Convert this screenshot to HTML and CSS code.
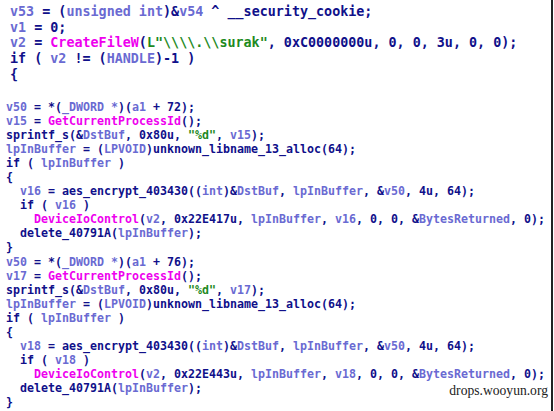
FILE: index.html
```html
<!DOCTYPE html>
<html>
<head>
<meta charset="utf-8">
<link rel="stylesheet" href="styles.css">
</head>
<body>
<div class="screen">
<pre class="code top"><span class="v">v53</span> = (<span class="v">unsigned int</span>)&amp;<span class="v">v54</span> ^ __security_cookie;
<span class="v">v1</span> = 0;
<span class="v">v2</span> = <span class="f">CreateFileW</span>(<span class="s">L"\\\\.\\surak"</span>, 0xC0000000u, 0, 0, 3u, 0, 0);
if ( <span class="v">v2</span> != (<span class="v">HANDLE</span>)-1 )
{</pre>
<pre class="code bottom"><span class="v">v50</span> = *(<span class="v">_DWORD *</span>)(<span class="v">a1</span> + 72);
<span class="v">v15</span> = <span class="f">GetCurrentProcessId</span>();
sprintf_s(&amp;<span class="v">DstBuf</span>, 0x80u, <span class="s">"%d"</span>, <span class="v">v15</span>);
<span class="v">lpInBuffer</span> = (<span class="v">LPVOID</span>)unknown_libname_13_alloc(64);
if ( <span class="v">lpInBuffer</span> )
{
  <span class="v">v16</span> = aes_encrypt_403430((<span class="v">int</span>)&amp;<span class="v">DstBuf</span>, <span class="v">lpInBuffer</span>, &amp;<span class="v">v50</span>, 4u, 64);
  if ( <span class="v">v16</span> )
    <span class="f">DeviceIoControl</span>(<span class="v">v2</span>, 0x22E417u, <span class="v">lpInBuffer</span>, <span class="v">v16</span>, 0, 0, &amp;<span class="v">BytesReturned</span>, 0);
  delete_40791A(<span class="v">lpInBuffer</span>);
}
<span class="v">v50</span> = *(<span class="v">_DWORD *</span>)(<span class="v">a1</span> + 76);
<span class="v">v17</span> = <span class="f">GetCurrentProcessId</span>();
sprintf_s(&amp;<span class="v">DstBuf</span>, 0x80u, <span class="s">"%d"</span>, <span class="v">v17</span>);
<span class="v">lpInBuffer</span> = (<span class="v">LPVOID</span>)unknown_libname_13_alloc(64);
if ( <span class="v">lpInBuffer</span> )
{
  <span class="v">v18</span> = aes_encrypt_403430((<span class="v">int</span>)&amp;<span class="v">DstBuf</span>, <span class="v">lpInBuffer</span>, &amp;<span class="v">v50</span>, 4u, 64);
  if ( <span class="v">v18</span> )
    <span class="f">DeviceIoControl</span>(<span class="v">v2</span>, 0x22E443u, <span class="v">lpInBuffer</span>, <span class="v">v18</span>, 0, 0, &amp;<span class="v">BytesReturned</span>, 0);
  delete_40791A(<span class="v">lpInBuffer</span>);
}</pre>
<div class="watermark">drops.wooyun.org</div>
</div>
</body>
</html>
```
FILE: styles.css
```css
html, body {
  margin: 0;
  padding: 0;
  background: #ffffff;
}
.screen {
  position: relative;
  width: 553px;
  height: 411px;
  box-sizing: border-box;
  border-right: 2px solid #222222;
  overflow: hidden;
  background: #ffffff;
}
.code {
  margin: 0;
  font-family: "DejaVu Sans Mono", "Liberation Mono", monospace;
  font-weight: bold;
  color: #10108a;
  white-space: pre;
}
.top {
  font-size: 13.39px;
  line-height: 15.7px;
  padding: 4px 0 0 10px;
}
.bottom {
  font-size: 11.63px;
  line-height: 14.1px;
  padding: 17px 0 0 6px;
}
.v { color: #6a6ad2; }
.f { color: #ee00ee; }
.s { color: #1e8a1e; }
.watermark {
  position: absolute;
  right: 3px;
  top: 383px;
  font-family: "Liberation Serif", "Times New Roman", serif;
  font-size: 13.6px;
  color: #222222;
  background: #ffffff;
  padding-left: 2px;
}
```
